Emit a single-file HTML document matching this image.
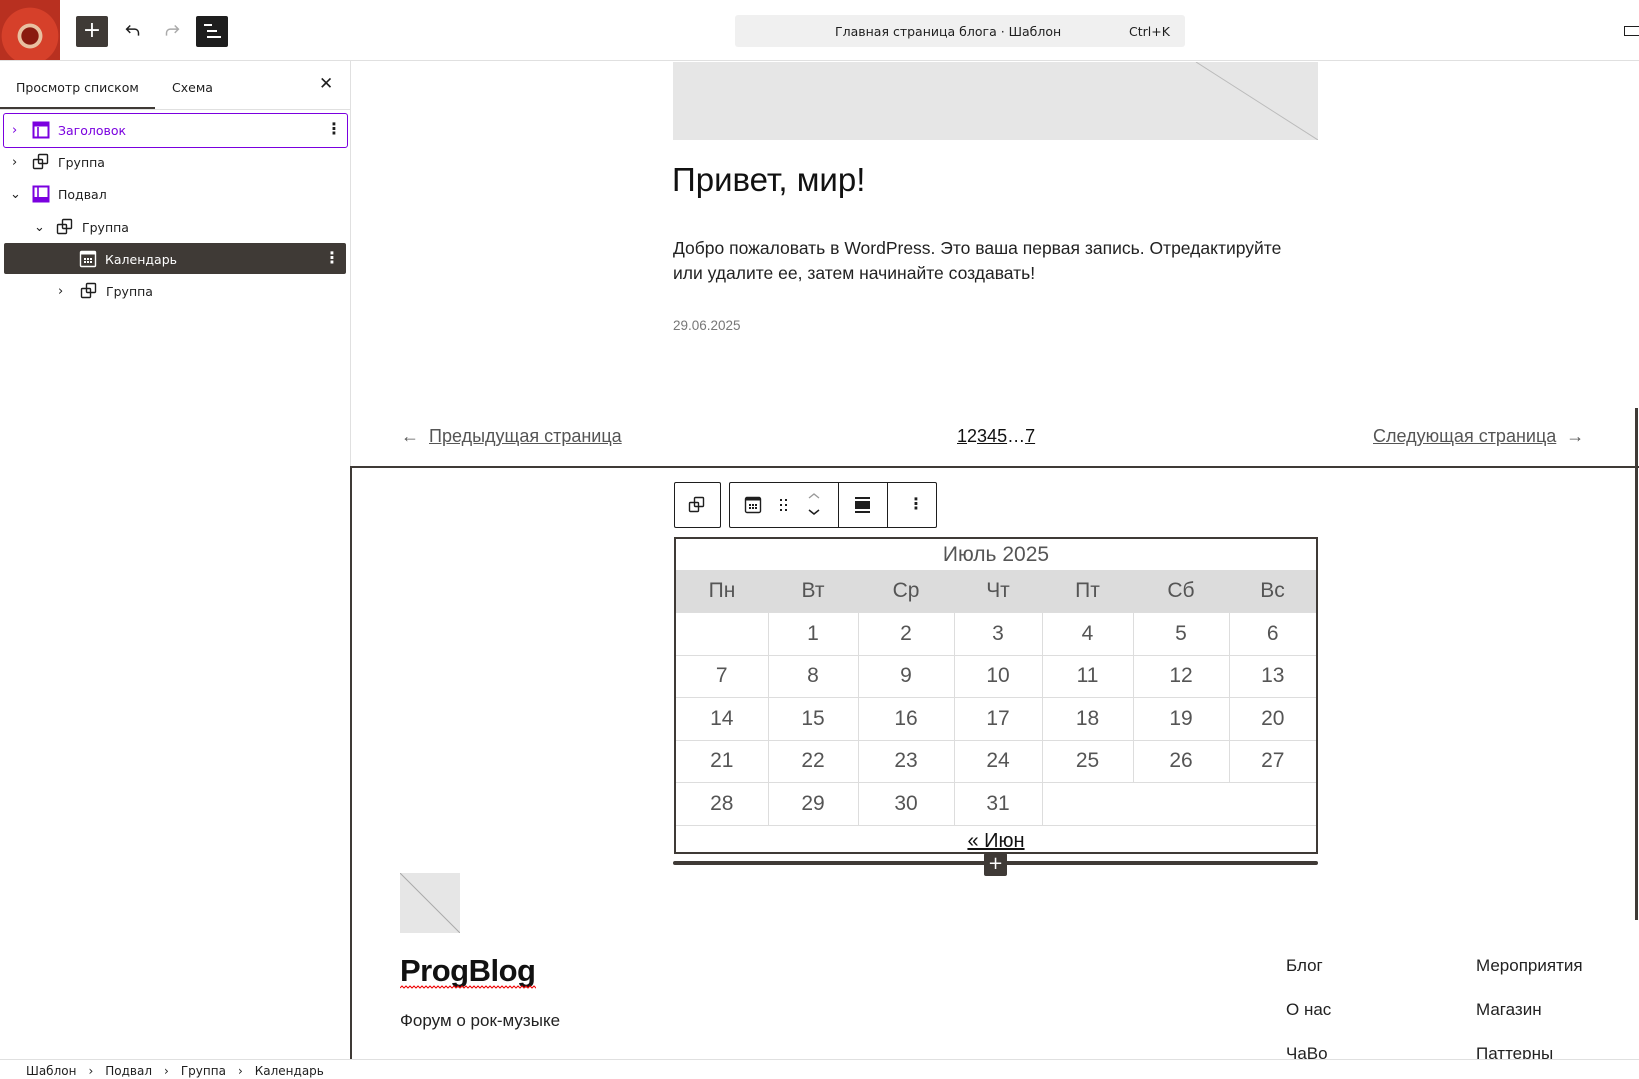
<!DOCTYPE html>
<html><head><meta charset="utf-8"><style>
*{margin:0;padding:0;box-sizing:border-box}
body{width:1639px;height:1079px;overflow:hidden;background:#fff;font-family:"DejaVu Sans","Liberation Sans",sans-serif;position:relative;color:#1e1e1e}
.a{position:absolute}
.ui{font-family:"DejaVu Sans",sans-serif;font-size:12.5px}
.c{font-family:"Liberation Sans",sans-serif}
svg{display:block}
.row{position:absolute;left:0;height:32px;display:flex;align-items:center;font-size:12.5px;white-space:nowrap}
.ch{width:20px;font-size:13px}
table{border-collapse:collapse}
</style></head><body>
<div class="a" style="left:0;top:0;width:1639px;height:61px;border-bottom:1px solid #e0e0e0;background:#fff"></div>
<div class="a" style="left:0;top:0;width:60px;height:60px;background:radial-gradient(circle at 50% 60%,#8a1a10 0 18%,#e8c0a0 19% 26%,#d6402a 27% 60%,#b83020 61%)"></div>
<div class="a" style="left:76px;top:16px;width:32px;height:31px;background:#3f3a36;border-radius:2px;color:#fff;font-size:22px;line-height:30px;text-align:center">+</div>
<svg class="a" style="left:122px;top:20px" width="22" height="22" viewBox="0 0 24 24"><path d="M18 17v-3a4 4 0 0 0-4-4H6M9 6l-4 4 4 4" fill="none" stroke="#1e1e1e" stroke-width="1.6"/></svg>
<svg class="a" style="left:161px;top:20px" width="22" height="22" viewBox="0 0 24 24"><path d="M6 17v-3a4 4 0 0 1 4-4h8M15 6l4 4-4 4" fill="none" stroke="#aaa" stroke-width="1.6"/></svg>
<div class="a" style="left:196px;top:16px;width:32px;height:31px;background:#1e1e1e;border-radius:2px"></div>
<div class="a" style="left:204px;top:24px;width:8px;height:1.5px;background:#fff"></div>
<div class="a" style="left:207px;top:30px;width:10px;height:1.5px;background:#fff"></div>
<div class="a" style="left:207px;top:36px;width:14px;height:1.5px;background:#fff"></div>
<div class="a ui" style="left:735px;top:15px;width:450px;height:32px;background:#f0f0f0;border-radius:3px"></div>
<div class="a ui" style="left:835px;top:24px;font-size:12.5px;color:#1e1e1e">Главная страница блога · Шаблон</div>
<div class="a ui" style="left:1129px;top:24px;font-size:12.5px;color:#1e1e1e">Ctrl+K</div>
<div class="a" style="left:1624px;top:26px;width:16px;height:10px;border:1.5px solid #1e1e1e;border-right:none"></div>

<div class="a" style="left:350px;top:61px;width:1px;height:998px;background:#e0e0e0"></div>
<div class="a ui" style="left:16px;top:80px;font-size:12.5px">Просмотр списком</div>
<div class="a ui" style="left:172px;top:80px;font-size:12.5px">Схема</div>
<div class="a" style="left:0;top:107px;width:155px;height:2px;background:#3f3a36"></div>
<div class="a" style="left:0;top:109px;width:350px;height:1px;background:#e0e0e0"></div>
<div class="a" style="left:319px;top:74px;font-size:17px">✕</div>

<div class="a" style="left:3px;top:113px;width:345px;height:35px;border:1.5px solid #7a00df;border-radius:3px"></div>
<div class="a" style="left:4px;top:243px;width:342px;height:31px;background:#3f3a36;border-radius:2px"></div>

<div class="row" style="top:114px;left:12px;color:#7a00df"><span class="ch">›</span>
<svg width="18" height="18" viewBox="0 0 18 18" style="margin-right:8px"><rect x="1.5" y="1.5" width="15" height="15" fill="none" stroke="#7a00df" stroke-width="2"/><rect x="1.5" y="1.5" width="15" height="4" fill="#7a00df"/><path d="M6 6v10" stroke="#7a00df" stroke-width="1.6"/></svg>Заголовок</div>
<div class="a" style="left:326px;top:119px;font-size:16px;font-weight:bold">⋮</div>

<div class="row" style="top:146px;left:12px"><span class="ch">›</span>
<svg width="18" height="18" viewBox="0 0 18 18" style="margin-right:8px"><rect x="1.5" y="6.5" width="9" height="9" rx="1" fill="none" stroke="#1e1e1e" stroke-width="1.4"/><rect x="6.5" y="1.5" width="9" height="9" rx="1" fill="none" stroke="#1e1e1e" stroke-width="1.4"/></svg>Группа</div>

<div class="row" style="top:178px;left:10px"><span class="ch" style="width:22px">⌄</span>
<svg width="18" height="18" viewBox="0 0 18 18" style="margin-right:8px"><rect x="1.5" y="1.5" width="15" height="15" fill="none" stroke="#7a00df" stroke-width="2"/><rect x="1.5" y="12" width="15" height="4.5" fill="#7a00df"/><path d="M6 2v11" stroke="#7a00df" stroke-width="1.6"/></svg>Подвал</div>

<div class="row" style="top:211px;left:34px"><span class="ch" style="width:22px">⌄</span>
<svg width="18" height="18" viewBox="0 0 18 18" style="margin-right:8px"><rect x="1.5" y="6.5" width="9" height="9" rx="1" fill="none" stroke="#1e1e1e" stroke-width="1.4"/><rect x="6.5" y="1.5" width="9" height="9" rx="1" fill="none" stroke="#1e1e1e" stroke-width="1.4"/></svg>Группа</div>

<div class="row" style="top:243px;left:79px;color:#fff">
<svg width="18" height="18" viewBox="0 0 18 18" style="margin-right:8px"><rect x="1.5" y="1.5" width="15" height="15" rx="1" fill="none" stroke="#fff" stroke-width="1.4"/><rect x="1.5" y="1.5" width="15" height="3" fill="#fff"/><g fill="#fff"><rect x="5" y="8" width="2" height="2"/><rect x="8" y="8" width="2" height="2"/><rect x="11" y="8" width="2" height="2"/><rect x="5" y="11" width="2" height="2"/><rect x="8" y="11" width="2" height="2"/><rect x="11" y="11" width="2" height="2"/></g></svg>Календарь</div>
<div class="a" style="left:324px;top:248px;font-size:16px;font-weight:bold;color:#fff">⋮</div>

<div class="row" style="top:275px;left:58px"><span class="ch" style="width:22px">›</span>
<svg width="18" height="18" viewBox="0 0 18 18" style="margin-right:8px"><rect x="1.5" y="6.5" width="9" height="9" rx="1" fill="none" stroke="#1e1e1e" stroke-width="1.4"/><rect x="6.5" y="1.5" width="9" height="9" rx="1" fill="none" stroke="#1e1e1e" stroke-width="1.4"/></svg>Группа</div>

<div class="a" style="left:673px;top:62px;width:645px;height:78px;background:#e6e6e6;overflow:hidden">
<svg width="645" height="78"><line x1="523" y1="0" x2="645" y2="78" stroke="#bbb" stroke-width="1"/></svg></div>
<div class="a c" style="left:672px;top:161px;font-size:33px;color:#111">Привет, мир!</div>
<div class="a c" style="left:673px;top:236px;font-size:17.5px;line-height:25px;color:#222;width:640px">Добро пожаловать в WordPress. Это ваша первая запись. Отредактируйте или удалите ее, затем начинайте создавать!</div>
<div class="a c" style="left:673px;top:318px;font-size:13.5px;color:#777">29.06.2025</div>

<div class="a c" style="left:401px;top:426px;font-size:18px;color:#555">← &nbsp;<u>Предыдущая страница</u></div>
<div class="a c" style="left:957px;top:426px;font-size:18px;color:#111"><u>1</u>2<u>3</u><u>4</u><u>5</u>…<u>7</u></div>
<div class="a c" style="left:1373px;top:426px;font-size:18px;color:#555"><u>Следующая страница</u> &nbsp;→</div>

<div class="a" style="left:350px;top:466px;width:1289px;height:2px;background:#3f3a36"></div>
<div class="a" style="left:350px;top:466px;width:2px;height:593px;background:#3f3a36"></div>
<div class="a" style="left:1635px;top:408px;width:3px;height:512px;background:#3f3a36"></div>

<div class="a" style="left:674px;top:482px;width:47px;height:46px;border:1px solid #1e1e1e;border-radius:2px;background:#fff"></div>
<svg class="a" style="left:688px;top:496px" width="18" height="18" viewBox="0 0 18 18"><rect x="1.5" y="6.5" width="9" height="9" rx="1" fill="none" stroke="#1e1e1e" stroke-width="1.4"/><rect x="6.5" y="1.5" width="9" height="9" rx="1" fill="none" stroke="#1e1e1e" stroke-width="1.4"/></svg>
<div class="a" style="left:729px;top:482px;width:208px;height:46px;border:1px solid #1e1e1e;border-radius:2px;background:#fff"></div>
<div class="a" style="left:838px;top:482px;width:1px;height:46px;background:#1e1e1e"></div>
<div class="a" style="left:887px;top:482px;width:1px;height:46px;background:#1e1e1e"></div>
<svg class="a" style="left:744px;top:496px" width="18" height="18" viewBox="0 0 18 18"><rect x="1.5" y="1.5" width="15" height="15" rx="1.5" fill="none" stroke="#1e1e1e" stroke-width="1.4"/><rect x="1.5" y="1.5" width="15" height="3" fill="#1e1e1e"/><g fill="#1e1e1e"><rect x="5" y="8" width="2" height="2"/><rect x="8" y="8" width="2" height="2"/><rect x="11" y="8" width="2" height="2"/><rect x="5" y="11" width="2" height="2"/><rect x="8" y="11" width="2" height="2"/><rect x="11" y="11" width="2" height="2"/></g></svg>
<svg class="a" style="left:778px;top:496px" width="12" height="18"><g fill="#1e1e1e"><rect x="2" y="3" width="2" height="2"/><rect x="7" y="3" width="2" height="2"/><rect x="2" y="8" width="2" height="2"/><rect x="7" y="8" width="2" height="2"/><rect x="2" y="13" width="2" height="2"/><rect x="7" y="13" width="2" height="2"/></g></svg>
<svg class="a" style="left:806px;top:490px" width="16" height="30"><path d="M3 8l5-4 5 4" fill="none" stroke="#999" stroke-width="1.3"/><path d="M3 20l5 4 5-4" fill="none" stroke="#1e1e1e" stroke-width="1.5"/></svg>
<div class="a" style="left:855px;top:497px;width:15px;height:1.5px;background:#1e1e1e"></div>
<div class="a" style="left:855px;top:501px;width:15px;height:8px;background:#1e1e1e"></div>
<div class="a" style="left:855px;top:511px;width:15px;height:1.5px;background:#1e1e1e"></div>
<div class="a" style="left:908px;top:494px;font-size:16px;font-weight:bold">⋮</div>

<div class="a c" style="left:674px;top:537px;width:644px;height:317px;border:2px solid #3f3a36;color:#555">
<div style="height:31px;text-align:center;font-size:21px;line-height:31px">Июль 2025</div>
<table style="width:640px;font-size:21px;text-align:center">
<colgroup><col style="width:92px"><col style="width:90px"><col style="width:96px"><col style="width:88px"><col style="width:91px"><col style="width:96px"><col style="width:87px"></colgroup>
<tr style="background:#dcdcdc;height:42px"><td>Пн</td><td>Вт</td><td>Ср</td><td>Чт</td><td>Пт</td><td>Сб</td><td>Вс</td></tr>
<tr style="height:43px"><td style="border:1px solid #ddd;border-left:none"></td><td style="border:1px solid #ddd">1</td><td style="border:1px solid #ddd">2</td><td style="border:1px solid #ddd">3</td><td style="border:1px solid #ddd">4</td><td style="border:1px solid #ddd">5</td><td style="border:1px solid #ddd;border-right:none">6</td></tr>
<tr style="height:42px"><td style="border:1px solid #ddd;border-left:none">7</td><td style="border:1px solid #ddd">8</td><td style="border:1px solid #ddd">9</td><td style="border:1px solid #ddd">10</td><td style="border:1px solid #ddd">11</td><td style="border:1px solid #ddd">12</td><td style="border:1px solid #ddd;border-right:none">13</td></tr>
<tr style="height:43px"><td style="border:1px solid #ddd;border-left:none">14</td><td style="border:1px solid #ddd">15</td><td style="border:1px solid #ddd">16</td><td style="border:1px solid #ddd">17</td><td style="border:1px solid #ddd">18</td><td style="border:1px solid #ddd">19</td><td style="border:1px solid #ddd;border-right:none">20</td></tr>
<tr style="height:42px"><td style="border:1px solid #ddd;border-left:none">21</td><td style="border:1px solid #ddd">22</td><td style="border:1px solid #ddd">23</td><td style="border:1px solid #ddd">24</td><td style="border:1px solid #ddd">25</td><td style="border:1px solid #ddd">26</td><td style="border:1px solid #ddd;border-right:none">27</td></tr>
<tr style="height:43px"><td style="border:1px solid #ddd;border-left:none">28</td><td style="border:1px solid #ddd">29</td><td style="border:1px solid #ddd">30</td><td style="border:1px solid #ddd">31</td><td colspan="3" style="border:1px solid #ddd;border-right:none"></td></tr>
</table>
<div style="text-align:center;font-size:20px;line-height:30px;color:#111"><u>« Июн</u></div>
</div>
<div class="a" style="left:673px;top:861px;width:645px;height:4px;background:#3f3a36;border-radius:2px"></div>
<div class="a" style="left:984px;top:853px;width:23px;height:23px;background:#3f3a36;border-radius:2px;color:#fff;text-align:center;font-size:18px;line-height:22px">+</div>

<div class="a" style="left:400px;top:873px;width:60px;height:60px;background:#e6e6e6"><svg width="60" height="60"><line x1="0" y1="0" x2="60" y2="60" stroke="#aaa"/></svg></div>
<div class="a c" style="left:400px;top:953px;font-size:31px;font-weight:bold;color:#111;letter-spacing:-0.5px">ProgBlog</div>
<svg class="a" style="left:400px;top:985px" width="136" height="5"><path d="M0 3 l2-2 2 2 2-2 2 2 2-2 2 2 2-2 2 2 2-2 2 2 2-2 2 2 2-2 2 2 2-2 2 2 2-2 2 2 2-2 2 2 2-2 2 2 2-2 2 2 2-2 2 2 2-2 2 2 2-2 2 2 2-2 2 2 2-2 2 2 2-2 2 2 2-2 2 2 2-2 2 2 2-2 2 2 2-2 2 2 2-2 2 2 2-2 2 2 2-2 2 2 2-2 2 2 2-2 2 2 2-2 2 2 2-2 2 2 2-2 2 2 2-2 2 2 2-2 2 2 2-2 2 2 2-2 2 2 2-2 2 2 2-2 2 2 2-2 2 2 2-2 2 2 2-2 2 2 2-2 2 2" fill="none" stroke="#e00" stroke-width="1"/></svg>
<div class="a c" style="left:400px;top:1011px;font-size:17px;color:#222">Форум о рок-музыке</div>
<div class="a c" style="left:1286px;top:956px;font-size:17px;color:#222">Блог</div>
<div class="a c" style="left:1286px;top:1000px;font-size:17px;color:#222">О нас</div>
<div class="a c" style="left:1286px;top:1044px;font-size:17px;color:#222">ЧаВо</div>
<div class="a c" style="left:1476px;top:956px;font-size:17px;color:#222">Мероприятия</div>
<div class="a c" style="left:1476px;top:1000px;font-size:17px;color:#222">Магазин</div>
<div class="a c" style="left:1476px;top:1044px;font-size:17px;color:#222">Паттерны</div>

<div class="a" style="left:0;top:1059px;width:1639px;height:20px;background:#fff;border-top:1px solid #e0e0e0"></div>
<div class="a ui" style="left:26px;top:1064px;font-size:12px;color:#1e1e1e;white-space:nowrap;word-spacing:0">Шаблон<span style="margin:0 12px">›</span>Подвал<span style="margin:0 12px">›</span>Группа<span style="margin:0 12px">›</span>Календарь</div>
</body></html>
